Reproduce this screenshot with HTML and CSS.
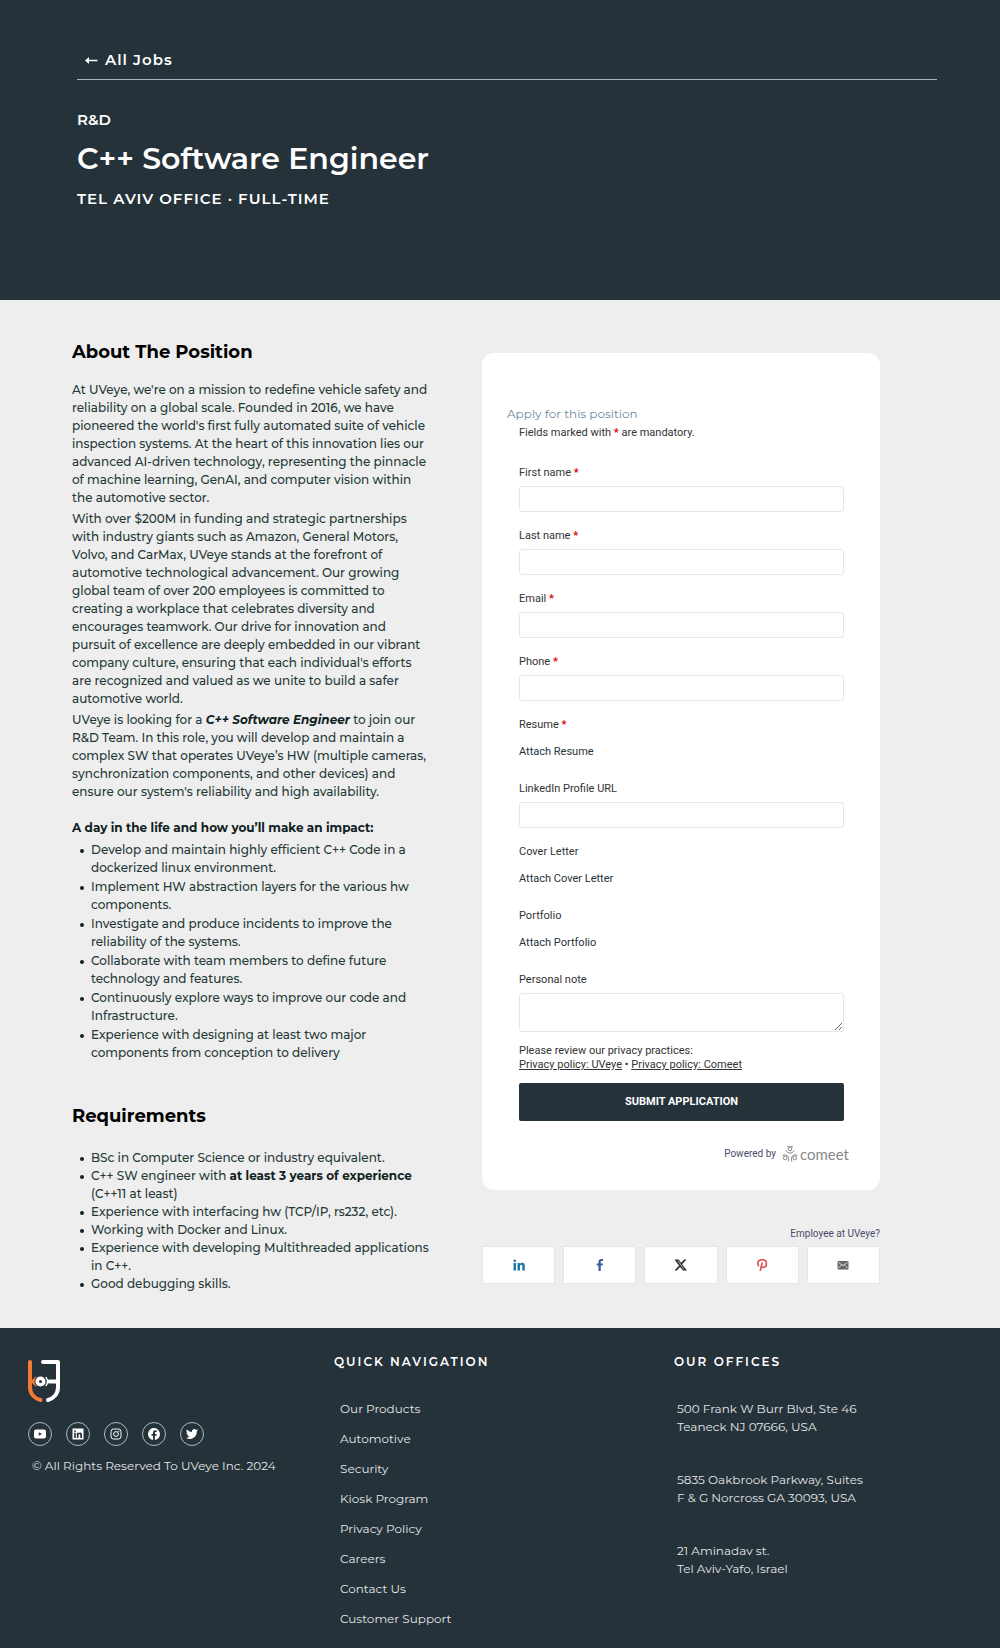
FILE: index.html
```html
<!DOCTYPE html>
<html lang="en">
<head>
<meta charset="utf-8">
<meta name="viewport" content="width=device-width, initial-scale=1">
<title>C++ Software Engineer - UVeye Careers</title>
<link rel="stylesheet" href="styles.css">
</head>
<body>
<header class="hero">
  <div class="hero-nav"><a class="back" href="#jobs"><svg class="back-arrow" viewBox="0 0 13 9" aria-hidden="true"><path d="M0 4.500L4 1V8Z" fill="currentColor"/><path d="M3 4.500H12.500" stroke="currentColor" stroke-width="1.500"/></svg>All Jobs</a></div>
  <p class="team">R&amp;D</p>
  <h1 class="job-title">C++ Software Engineer</h1>
  <p class="job-meta">TEL AVIV OFFICE · FULL-TIME</p>
</header>

<main class="content">
  <article class="description">
    <h2 class="section-title">About The Position</h2>
    <p class="para">At UVeye, we're on a mission to redefine vehicle safety and reliability on a global scale. Founded in 2016, we have pioneered the world's first fully automated suite of vehicle inspection systems. At the heart of this innovation lies our advanced AI-driven technology, representing the pinnacle of machine learning, GenAI, and computer vision within the automotive sector.</p>
    <p class="para">With over $200M in funding and strategic partnerships with industry giants such as Amazon, General Motors, Volvo, and CarMax, UVeye stands at the forefront of automotive technological advancement. Our growing global team of over 200 employees is committed to creating a workplace that celebrates diversity and encourages teamwork. Our drive for innovation and pursuit of excellence are deeply embedded in our vibrant company culture, ensuring that each individual's efforts are recognized and valued as we unite to build a safer automotive world.</p>
    <p class="para">UVeye is looking for a <strong><em>C++ Software Engineer</em></strong> to join our R&amp;D Team. In this role, you will develop and maintain a complex SW that operates UVeye’s HW (multiple cameras, synchronization components, and other devices) and ensure our system's reliability and high availability.</p>
    <h3 class="sub-title">A day in the life and how you’ll make an impact:</h3>
    <ul class="bullets spaced">
      <li>Develop and maintain highly efficient C++ Code in a dockerized linux environment.</li>
      <li>Implement HW abstraction layers for the various hw components.</li>
      <li>Investigate and produce incidents to improve the reliability of the systems.</li>
      <li>Collaborate with team members to define future technology and features.</li>
      <li>Continuously explore ways to improve our code and Infrastructure.</li>
      <li>Experience with designing at least two major components from conception to delivery</li>
    </ul>
    <h2 class="section-title requirements-title">Requirements</h2>
    <ul class="bullets">
      <li>BSc in Computer Science or industry equivalent.</li>
      <li>C++ SW engineer with <strong>at least 3 years of experience</strong> (C++11 at least)</li>
      <li>Experience with interfacing hw (TCP/IP, rs232, etc).</li>
      <li>Working with Docker and Linux.</li>
      <li>Experience with developing Multithreaded applications in C++.</li>
      <li>Good debugging skills.</li>
    </ul>
  </article>

  <aside class="apply">
    <form class="card">
      <h2 class="card-title">Apply for this position</h2>
      <div class="card-body">
        <p class="hint">Fields marked with <span class="req">*</span> are mandatory.</p>
        <div class="field"><label for="first">First name <span class="req">*</span></label><input class="box" id="first" type="text" required></div>
        <div class="field"><label for="last">Last name <span class="req">*</span></label><input class="box" id="last" type="text" required></div>
        <div class="field"><label for="email">Email <span class="req">*</span></label><input class="box" id="email" type="email" required></div>
        <div class="field"><label for="phone">Phone <span class="req">*</span></label><input class="box" id="phone" type="tel" required></div>
        <div class="field attach-field"><label for="resume">Resume <span class="req">*</span></label><button class="attach" id="resume" type="button">Attach Resume</button></div>
        <div class="field"><label for="linkedin">LinkedIn Profile URL</label><input class="box" id="linkedin" type="url"></div>
        <div class="field attach-field"><label for="cover">Cover Letter</label><button class="attach" id="cover" type="button">Attach Cover Letter</button></div>
        <div class="field attach-field"><label for="portfolio">Portfolio</label><button class="attach" id="portfolio" type="button">Attach Portfolio</button></div>
        <div class="field note-field"><label for="note">Personal note</label><textarea class="box note" id="note"></textarea></div>
        <p class="privacy">Please review our privacy practices:<br><a href="#uveye-privacy">Privacy policy: UVeye</a> • <a href="#comeet-privacy">Privacy policy: Comeet</a></p>
        <button class="submit" type="submit">SUBMIT APPLICATION</button>
      </div>
      <p class="powered">Powered by
        <a class="comeet" href="#comeet">
          <svg class="comeet-mark" viewBox="0 0 16 16" fill="none" stroke="currentColor" aria-hidden="true"><circle cx="8" cy="3" r="1.800"/><circle cx="3.200" cy="12" r="1.800"/><circle cx="12.800" cy="12" r="1.800"/><path d="M5 1Q8-1 11 1M4 4.500Q5 7.200 8 7.200T12 4.500M.6 9.600Q3.500 7.800 5.500 9.800T6.200 15.500M15.400 9.600Q12.500 7.800 10.500 9.800T9.800 15.500"/></svg>
          <span>comeet</span>
        </a>
      </p>
    </form>
    <a class="employee" href="#employee">Employee at UVeye?</a>
    <div class="share">
      <button class="share-button linkedin" type="button" aria-label="Share on LinkedIn"><svg viewBox="0 0 24 24"><path d="M1 8h5v15H1zM3.500 1a2.600 2.600 0 1 1 0 5.200 2.600 2.600 0 0 1 0-5.200zM9 8h4.700v2.100c.9-1.600 2.600-2.500 4.700-2.500 4 0 5.200 2.600 5.200 6.600V23h-5v-8c0-2-.4-3.400-2.200-3.400-1.900 0-2.500 1.400-2.500 3.400v8H9z"/></svg></button>
      <button class="share-button facebook" type="button" aria-label="Share on Facebook"><svg viewBox="0 0 24 24"><path d="M9 24V13H5.500V9H9V5.800C9 2.100 11.200 0 14.700 0c1.500 0 2.800.1 3.300.2v3.900h-2.300c-1.900 0-2.200.9-2.200 2.200V9h4.300l-.6 4h-3.700v11z"/></svg></button>
      <button class="share-button x" type="button" aria-label="Share on X"><svg viewBox="0 0 24 24"><path d="M18.200 1.500h3.700l-8 9.200L23.300 22.500H16l-5.800-7.200-6.600 7.200H0l8.500-9.600L-.5 1.500H7l5.200 6.600zM4.700 3.700l12.500 16.600h2L7 3.700z" stroke="currentColor"/></svg></button>
      <button class="share-button pinterest" type="button" aria-label="Share on Pinterest"><svg viewBox="0 0 24 24"><path d="M6 14C4 12.500 3.300 10.500 3.500 8.500 4 4.500 7.500 1.500 12.300 1.500c5 0 8.500 3 8.500 7.300 0 4.500-2.800 7.700-6.500 7.700-2 0-3.300-.8-3.800-2M12.500 7L8.500 23.500" fill="none" stroke="currentColor" stroke-width="3.200"/></svg></button>
      <button class="share-button mail" type="button" aria-label="Share by email"><svg viewBox="0 0 24 24"><rect x="1" y="4" width="22" height="17" rx="2"/><path d="M3 7l9 6 9-6M3 18l6-6M21 18l-6-6" fill="none" stroke="#fff" stroke-width="1.500"/></svg></button>
    </div>
  </aside>
</main>

<footer class="footer">
  <div class="brand">
    <a class="logo" href="#home" aria-label="UVeye"><svg viewBox="0 0 32 42" fill="none" stroke-width="4" stroke-linecap="round" stroke-linejoin="round"><path d="M2 2V27C2 34 6.500 38.500 12.500 40" stroke="#f47b36"/><path d="M8 17.500L4 21.500L8 25.500" fill="#f47b36" stroke="#f47b36" stroke-width="2"/><path d="M15 2H30V27C30 34 25.500 38.500 20 40M21 21.500H29" stroke="#fff"/><path d="M18 17.500Q21 21.500 18 25.500" stroke="#fff" stroke-width="1.500"/><circle cx="12.500" cy="21.500" r="6" fill="#26323a" stroke="none"/><circle cx="12.500" cy="21.500" r="3.300" stroke="#fff" stroke-width="3.600"/></svg></a>
    <div class="social">
      <a href="#youtube" aria-label="YouTube"><svg viewBox="0 0 24 24"><path fill-rule="evenodd" d="M4 3h16q4 0 4 4v10q0 4-4 4H4q-4 0-4-4V7q0-4 4-4zm5.500 5.500v7L16 12z"/></svg></a>
      <a href="#linkedin-page" aria-label="LinkedIn"><svg viewBox="0 0 24 24"><path fill-rule="evenodd" d="M2 1h20q1 0 1 1v20q0 1-1 1H2q-1 0-1-1V2q0-1 1-1zm2.300 8.500V20h3.300V9.500zM6 4.300A1.900 1.900 0 1 0 6 8.100 1.900 1.900 0 0 0 6 4.300zM9.700 9.500V20H13v-5.200c0-1.500.5-2.500 1.900-2.500s1.700 1.200 1.700 2.600V20H20v-5.800c0-3-.8-5-3.800-5-1.600 0-2.700.8-3.200 1.700V9.500z"/></svg></a>
      <a href="#instagram" aria-label="Instagram"><svg viewBox="0 0 24 24" fill="none" stroke="currentColor" stroke-width="2"><rect x="2" y="2" width="20" height="20" rx="5"/><circle cx="12" cy="12" r="4.800"/><circle cx="17.700" cy="6.300" r=".6"/></svg></a>
      <a href="#facebook-page" aria-label="Facebook"><svg viewBox="0 0 24 24"><path d="M24 12A12 12 0 1 0 10.100 23.900v-8.400H7V12h3.100V9.400c0-3 1.800-4.700 4.500-4.700 1.300 0 2.700.2 2.700.2v3h-1.500c-1.500 0-2 .9-2 1.900V12h3.400l-.5 3.500h-2.900v8.400A12 12 0 0 0 24 12z"/></svg></a>
      <a href="#twitter" aria-label="Twitter"><svg viewBox="0 0 24 24"><path d="M24 4.600a10 10 0 0 1-2.800.8 5 5 0 0 0 2.100-2.700 10 10 0 0 1-3.100 1.200 4.900 4.900 0 0 0-8.400 4.500A14 14 0 0 1 1.700 3.200a4.900 4.900 0 0 0 1.500 6.500 5 5 0 0 1-2.200-.6 4.900 4.900 0 0 0 3.900 4.900 5 5 0 0 1-2.200.1 4.900 4.900 0 0 0 4.600 3.400A10 10 0 0 1 0 19.500 14 14 0 0 0 21.500 7a10 10 0 0 0 2.500-2.400z"/></svg></a>
    </div>
    <p class="copyright">© All Rights Reserved To UVeye Inc. 2024</p>
  </div>
  <nav class="quick" aria-labelledby="quick-title">
    <h2 class="footer-title" id="quick-title">QUICK NAVIGATION</h2>
    <ul class="links">
      <li><a href="#products">Our Products</a></li>
      <li><a href="#automotive">Automotive</a></li>
      <li><a href="#security">Security</a></li>
      <li><a href="#kiosk">Kiosk Program</a></li>
      <li><a href="#privacy">Privacy Policy</a></li>
      <li><a href="#careers">Careers</a></li>
      <li><a href="#contact">Contact Us</a></li>
      <li><a href="#support">Customer Support</a></li>
    </ul>
  </nav>
  <section class="offices">
    <h2 class="footer-title">OUR OFFICES</h2>
    <address>500 Frank W Burr Blvd, Ste 46<br>Teaneck NJ 07666, USA</address>
    <address>5835 Oakbrook Parkway, Suites<br>F &amp; G Norcross GA 30093, USA</address>
    <address>21 Aminadav st.<br>Tel Aviv-Yafo, Israel</address>
  </section>
</footer>
</body>
</html>
```
FILE: styles.css
```css
* {
  box-sizing: border-box;
}

body,
h1,
h2,
h3,
p,
ul {
  margin: 0;
  padding: 0;
}

body {
  background: #eee;
  color: #243836;
  font: 500 12px/18px Montserrat, Inter, sans-serif;
}

a {
  color: inherit;
  text-decoration: none;
}

button {
  font: inherit;
  cursor: pointer;
}

/* Header */
.hero {
  padding: 48px 63px 91px 77px;
  background: #26323a;
  color: #fff;
}

.hero-nav {
  padding: 0 8px 7px;
  border-bottom: 1px solid #aab4bb;
}

.back {
  display: inline-flex;
  align-items: center;
  gap: 7px;
  font-size: 15px;
  line-height: 24px;
  font-weight: 600;
  letter-spacing: 1px;
}

.back-arrow {
  width: 13px;
  height: 9px;
}

.team {
  margin-top: 30px;
  font-size: 15px;
  line-height: 20px;
  font-weight: 600;
}

.job-title {
  margin-top: 9px;
  font-size: 30px;
  line-height: 40px;
  font-weight: 600;
}

.job-meta {
  margin-top: 10px;
  font-size: 15px;
  line-height: 20px;
  font-weight: 600;
  letter-spacing: 1px;
}

/* Main columns */
.content {
  display: grid;
  grid-template-columns: 360fr 398fr;
  gap: 50px;
  padding: 0 12% 35px 72px;
}

.description {
  padding-top: 40px;
}

.section-title {
  margin-bottom: 17px;
  color: #000;
  font-size: 18px;
  line-height: 24px;
  font-weight: 700;
}

.para {
  margin-bottom: 3px;
}

.sub-title {
  margin: 18px 0 4px;
  color: #10211f;
  font-size: 12px;
  line-height: 18px;
  font-weight: 700;
}

.para strong,
.bullets strong {
  color: #10211f;
}

.bullets {
  padding-left: 19px;
  list-style: none;
}

.bullets li::before {
  content: "";
  display: inline-block;
  width: 4px;
  height: 4px;
  margin: 0 7px 0 -11px;
  border-radius: 50%;
  background: #10211f;
  vertical-align: middle;
}

.spaced li {
  margin-bottom: 1px;
}

.requirements-title {
  margin: 42px 0 21px;
}

/* Application form */
.apply {
  display: flex;
  flex-direction: column;
  padding-top: 53px;
  font-family: Roboto, sans-serif;
  font-weight: 400;
  font-size: 11px;
  line-height: 14px;
}

.card {
  padding: 52px 25px 26px;
  border-radius: 12px;
  background: #fff;
  color: #333;
}

.card-title {
  color: #6f8799;
  font: 400 12px/18px Montserrat, Inter, sans-serif;
}

.card-body {
  padding: 3px 11px 0 12px;
}

.req {
  color: #d80000;
  font-weight: 700;
}

.hint {
  margin-bottom: 26px;
}

.field {
  display: flex;
  flex-direction: column;
  gap: 6px;
  margin-bottom: 17px;
}

.attach-field {
  align-items: flex-start;
  margin-bottom: 16px;
}

.note-field {
  margin-bottom: 12px;
}

.box {
  display: block;
  width: 100%;
  height: 26px;
  padding: 4px 8px;
  border: 1px solid #e4e6f2;
  border-radius: 3px;
  background: #fff;
  font: inherit;
}

.note {
  height: 39px;
  resize: vertical;
}

.attach {
  height: 28px;
  padding: 0;
  border: 0;
  background: none;
  color: #26323a;
}

.privacy a {
  text-decoration: underline;
}

.submit {
  display: block;
  width: 100%;
  height: 38px;
  margin-top: 11px;
  border: 0;
  border-radius: 2px;
  background: #26323a;
  color: #fff;
  font-weight: 700;
}

.powered {
  display: flex;
  justify-content: flex-end;
  align-items: center;
  gap: 6px;
  margin-top: 23px;
  padding-right: 6px;
  color: #4a4d6b;
  font-size: 10px;
  line-height: 20px;
}

.comeet {
  display: flex;
  align-items: center;
  gap: 2px;
  color: #8a8a8a;
  font-family: Lato, sans-serif;
  font-size: 15px;
}

.comeet-mark {
  width: 16px;
  height: 16px;
}

.employee {
  align-self: flex-end;
  margin-top: 37px;
  color: #4a4d6b;
  font-size: 10px;
}

.share {
  display: grid;
  grid-template-columns: repeat(5, 1fr);
  gap: 8px;
  margin-top: 5px;
}

.share-button {
  display: flex;
  align-items: center;
  justify-content: center;
  height: 38px;
  padding: 0;
  border: 1px solid #e6e6e6;
  background: #fff;
}

.share-button svg {
  width: 12px;
  height: 12px;
  fill: currentColor;
}

.linkedin {
  color: #1c75a8;
}

.facebook {
  color: #3b5ba5;
}

.x {
  color: #333;
}

.pinterest {
  color: #dd4b4f;
}

.mail {
  color: #666;
}

/* Footer */
.footer {
  display: grid;
  grid-template-columns: 306fr 340fr 298fr;
  padding: 24px 28px 20px;
  background: #26323a;
  color: #e2e5e7;
  font-weight: 400;
}

.logo {
  display: block;
  margin-top: 8px;
}

.logo svg {
  display: block;
  width: 32px;
  height: 42px;
}

.social {
  display: flex;
  gap: 14px;
  margin-top: 20px;
}

.social a {
  display: flex;
  align-items: center;
  justify-content: center;
  width: 24px;
  height: 24px;
  border: 1px solid #a9bac6;
  border-radius: 50%;
  color: #fff;
}

.social svg {
  width: 12px;
  height: 12px;
  fill: currentColor;
}

.social a:nth-child(3) svg {
  fill: none;
}

.copyright {
  margin: 11px 0 0 4px;
}

.footer-title {
  color: #fff;
  font-size: 12px;
  line-height: 20px;
  font-weight: 600;
  letter-spacing: 2px;
}

.links {
  display: grid;
  gap: 12px;
  margin-top: 28px;
  padding-left: 6px;
  list-style: none;
}

.offices address {
  margin: 28px 0 35px 3px;
  font-style: normal;
}

.offices address + address {
  margin-top: 0;
}
```
